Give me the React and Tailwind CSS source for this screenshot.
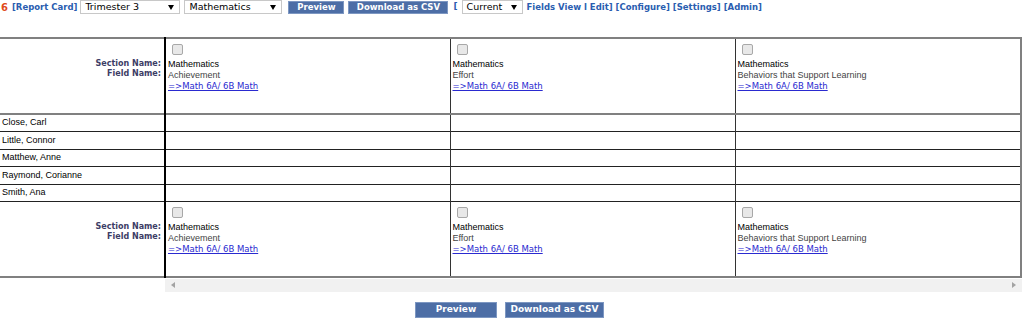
const STUDENTS = ["Close, Carl", "Little, Connor", "Matthew, Anne", "Raymond, Corianne", "Smith, Ana"];
const FIELDS = ["Achievement", "Effort", "Behaviors that Support Learning"];

const verdana = "font-['DejaVu_Sans',Verdana,sans-serif]";
const arial = "font-['Liberation_Sans',Arial,sans-serif]";

function FakeSelect({ width, label }) {
  return (
    <div
      className={`flex items-center justify-between h-[14px] border border-[#c8c8c8] bg-white pl-[4px] pr-[5px] ${width} text-[9.5px] font-normal text-black ${verdana}`}
    >
      <span>{label}</span>
      <span className="w-0 h-0 border-l-[3px] border-r-[3px] border-t-[5px] border-l-transparent border-r-transparent border-t-black" />
    </div>
  );
}

function Btn({ children, className }) {
  return (
    <div
      className={`flex items-center justify-center bg-[#4d6ea6] border border-[#7d97c2] text-white font-bold ${verdana} ${className}`}
    >
      {children}
    </div>
  );
}

function Checkbox() {
  return <div className="w-[11px] h-[11px] ml-[4px] rounded-[2px] border border-[#a8a8a8] bg-[#e8e8e8]" />;
}

function HeaderCell({ field, last }) {
  return (
    <td
      className={`align-top p-0 ${last ? "border-r-2 border-r-[#808080]" : "border-r border-r-[#333]"}`}
    >
      <div className="pt-[5px] pl-[2px] h-full">
        <Checkbox />
        <div className={`${arial} mt-[4px] text-[9px] leading-[11px] text-black`}>Mathematics</div>
        <div className={`${arial} text-[9px] leading-[11px] text-[#444]`}>{field}</div>
        <a href="#" className={`${verdana} block text-[8.5px] leading-[11px] text-[#2a2ad0] underline`}>
          =&gt;Math 6A/ 6B Math
        </a>
      </div>
    </td>
  );
}

function HeaderRow({ h }) {
  return (
    <tr className={h}>
      <td className="align-top p-0 border-r-2 border-r-black">
        <div className={`${verdana} pt-[20px] pr-[3px] text-right text-[8px] leading-[10px] font-bold text-[#3d3d66]`}>
          <div>Section Name:</div>
          <div>Field Name:</div>
        </div>
      </td>
      {FIELDS.map((f, i) => (
        <HeaderCell key={f} field={f} last={i === FIELDS.length - 1} />
      ))}
    </tr>
  );
}

export default function App() {
  return (
    <div className="w-[1024px] h-[324px] bg-white overflow-hidden">
      {/* toolbar */}
      <div className={`flex items-center h-[14px] ${verdana} text-[8.5px] font-bold text-[#2a5db0]`}>
        <span className="ml-[1px] text-[10px] text-[#e04b1c]">6</span>
        <span className="ml-[4px]">[Report Card]</span>
        <div className="ml-[3px]">
          <FakeSelect width="w-[100px]" label="Trimester 3" />
        </div>
        <div className="ml-[4px]">
          <FakeSelect width="w-[98px]" label="Mathematics" />
        </div>
        <Btn className="ml-[6px] w-[56px] h-[13px] text-[8.5px]">Preview</Btn>
        <Btn className="ml-[4px] w-[100px] h-[13px] text-[8.5px]">Download as CSV</Btn>
        <span className="ml-[5px] text-[9px]">[</span>
        <div className="ml-[4px]">
          <FakeSelect width="w-[61px]" label="Current" />
        </div>
        <span className="ml-[4px]">Fields View l Edit] [Configure] [Settings] [Admin]</span>
      </div>

      {/* grid */}
      <table className="mt-[23px] w-[1022px] table-fixed border-collapse border-t-2 border-t-[#808080] border-b-2 border-b-[#808080]">
        <colgroup>
          <col className="w-[165px]" />
          <col className="w-[285px]" />
          <col className="w-[285px]" />
          <col />
        </colgroup>
        <tbody>
          <HeaderRow h="h-[76px]" />
          {STUDENTS.map((s, i) => (
            <tr
              key={s}
              className={`h-[17.5px] ${i === 0 ? "border-t-2 border-t-[#808080]" : "border-t border-t-[#222]"}`}
            >
              <td className={`p-0 pl-[2px] border-r-2 border-r-black ${arial} text-[9px] text-black`}>{s}</td>
              <td className="p-0 border-r border-r-[#333]" />
              <td className="p-0 border-r border-r-[#333]" />
              <td className="p-0 border-r-2 border-r-[#808080]" />
            </tr>
          ))}
          <tr className="border-t border-t-[#222]" />
          <HeaderRow h="h-[75px]" />
        </tbody>
      </table>

      {/* horizontal scrollbar */}
      <div className="mt-[1px] ml-[165px] w-[857px] h-[13px] bg-[#f1f1f1] flex items-center justify-between px-[6px]">
        <span className="w-0 h-0 border-t-[3px] border-b-[3px] border-r-[4px] border-t-transparent border-b-transparent border-r-[#a3a3a3]" />
        <span className="w-0 h-0 border-t-[3px] border-b-[3px] border-l-[4px] border-t-transparent border-b-transparent border-l-[#a3a3a3]" />
      </div>

      {/* bottom buttons */}
      <div className="flex justify-center gap-[8px] mt-[10px] pr-[5px]">
        <Btn className="w-[82px] h-[16px] text-[9px]">Preview</Btn>
        <Btn className="w-[99px] h-[16px] text-[9px]">Download as CSV</Btn>
      </div>
    </div>
  );
}
